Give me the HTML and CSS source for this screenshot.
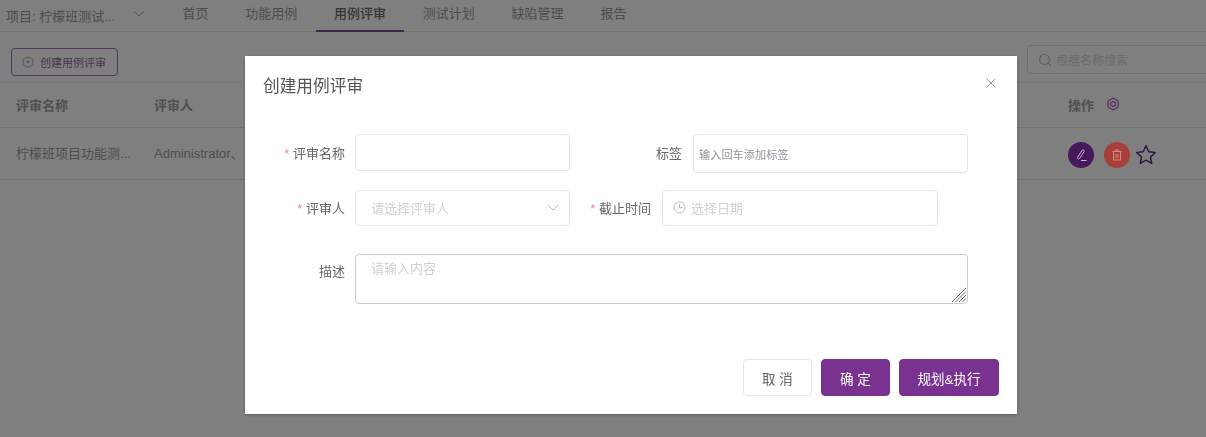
FILE: index.html
```html
<!DOCTYPE html>
<html lang="zh-CN">
<head>
    <meta charset="UTF-8">
    <title>创建用例评审</title>
    <link rel="stylesheet" href="styles.css">
</head>
<body>

    <div class="topbar">
        <div class="project">项目: 柠檬班测试...</div>
        <svg class="project-arrow" width="12" height="12" viewBox="0 0 12 12"><path d="M1 3.500 6 8l5-4.500" fill="none" stroke="#aaa" stroke-width="1"/></svg>
        <div class="nav">
            <a class="nav-item">首页</a>
            <a class="nav-item">功能用例</a>
            <a class="nav-item active">用例评审</a>
            <a class="nav-item">测试计划</a>
            <a class="nav-item">缺陷管理</a>
            <a class="nav-item">报告</a>
        </div>
    </div>

    <div class="toolbar">
        <button class="create-btn">
            <svg width="12" height="12" viewBox="0 0 12 12"><circle cx="6" cy="6" r="5" fill="none" stroke="#a8a8a8" stroke-width="1"/><circle cx="6" cy="6" r="1.300" fill="#a8a8a8"/></svg>
            创建用例评审
        </button>
        <div class="search">
            <svg width="14" height="14" viewBox="0 0 14 14"><circle cx="6.500" cy="6.500" r="5" fill="none" stroke="#c0c4cc" stroke-width="1.200"/><path d="M10 10l3 3" stroke="#c0c4cc" stroke-width="1.200"/></svg>
            <span>根据名称搜索</span>
        </div>
    </div>

    <div class="table-row table-head">
        <div class="col-name">评审名称</div>
        <div class="col-user">评审人</div>
        <div class="col-ops">操作
            <svg class="gear" width="14" height="14" viewBox="0 0 14 14"><path d="M7 1l5 3v6l-5 3-5-3V4z" fill="none" stroke="#a860d0" stroke-width="1.200"/><circle cx="7" cy="7" r="2.300" fill="none" stroke="#a860d0" stroke-width="1.200"/></svg>
        </div>
    </div>
    <div class="table-row table-body">
        <div class="col-name">柠檬班项目功能测...</div>
        <div class="col-user">Administrator、</div>
        <div class="col-ops">
            <span class="round-btn edit">
                <svg width="14" height="14" viewBox="0 0 14 14"><path d="M3.500 9.500l4.500-7c1-1.200 2.800-.2 2 1.200L6 10c-1 1.200-3 .8-2.500-.5zM7 12.500h5.500" fill="none" stroke="#c8b4d4" stroke-width="1"/></svg>
            </span>
            <span class="round-btn del">
                <svg width="14" height="14" viewBox="0 0 14 14"><path d="M2.500 3.500h9M5.500 3.500V2h3v1.500M3.500 3.500v8.500h7V3.500M6 6v4M8 6v4" fill="none" stroke="#d08a84" stroke-width="1"/></svg>
            </span>
            <svg class="star" width="22" height="22" viewBox="0 0 22 22"><path d="M11 1.800l2.800 6 6.400.8-4.700 4.400 1.200 6.400-5.700-3.200-5.700 3.200 1.200-6.400L1.800 8.600l6.400-.8z" fill="none" stroke="#5e2e88" stroke-width="1.500" stroke-linejoin="round"/></svg>
        </div>
    </div>

    <div class="overlay">
        <div class="dialog">
            <div class="dialog-head">
                <span class="dialog-title">创建用例评审</span>
                <svg class="close" width="12" height="12" viewBox="0 0 12 12"><path d="M1.500 1.500l9 9M10.500 1.500l-9 9" stroke="#999" stroke-width="1"/></svg>
            </div>

            <div class="form">
                <div class="form-row row-one">
                    <label class="form-label"><i>*</i> 评审名称</label>
                    <div class="field field-name"></div>
                    <label class="form-label label-tag">标签</label>
                    <div class="field field-tag">输入回车添加标签</div>
                </div>
                <div class="form-row row-two">
                    <label class="form-label"><i>*</i> 评审人</label>
                    <div class="field field-name field-select">
                        <span>请选择评审人</span>
                        <svg width="12" height="12" viewBox="0 0 12 12"><path d="M1 4l5 5 5-5" fill="none" stroke="#bbb" stroke-width="1"/></svg>
                    </div>
                    <label class="form-label label-date"><i>*</i> 截止时间</label>
                    <div class="field field-date">
                        <svg width="13" height="13" viewBox="0 0 13 13"><circle cx="6.500" cy="6.500" r="5.500" fill="none" stroke="#bbb" stroke-width="1"/><path d="M6.500 3.200v3.500h3" fill="none" stroke="#bbb" stroke-width="1"/></svg>
                        <span>选择日期</span>
                    </div>
                </div>
                <div class="form-row row-three">
                    <label class="form-label">描述</label>
                    <div class="field field-desc">
                        <span>请输入内容</span>
                        <svg class="resize" width="16" height="16" viewBox="0 0 16 16"><path d="M1 15 15 1M4.500 15 15 4.500M8 15l7-7M11.500 15l3.500-3.500" stroke="#666" stroke-width="1"/></svg>
                    </div>
                </div>
            </div>

            <div class="dialog-foot">
                <button class="btn btn-plain">取 消</button>
                <button class="btn btn-primary">确 定</button>
                <button class="btn btn-primary btn-wide">规划&amp;执行</button>
            </div>
        </div>
    </div>

</body>
</html>
```

FILE: styles.css
```css
* {
    margin: 0;
    padding: 0;
    box-sizing: border-box;
}

body {
    font-family: "Liberation Sans", "Noto Sans CJK SC", sans-serif;
    background: #ffffff;
    color: #606266;
    height: 437px;
    overflow: hidden;
}

.topbar {
    display: flex;
    align-items: center;
    height: 32px;
    border-bottom: 1px solid #e6e6e6;
    font-size: 13px;
}

.project {
    width: 133px;
    padding-left: 6px;
    color: #999999;
}

.project-arrow {
    margin-top: -4px;
}

.nav {
    display: flex;
    margin-left: 19px;
    height: 32px;
}

.nav-item {
    padding: 0 18.400px;
    line-height: 27px;
    color: #999999;
}

.nav-item.active {
    color: #6b6b6b;
    font-weight: 500;
    border-bottom: 2px solid #7b4aa0;
}

.toolbar {
    display: flex;
    justify-content: space-between;
    align-items: center;
    height: 51px;
    padding: 10px 0 0 11px;
    border-bottom: 1px solid #ebeef5;
}

.create-btn {
    display: flex;
    align-items: center;
    gap: 6px;
    width: 107px;
    height: 28px;
    padding-left: 10px;
    background: #ffffff;
    border: 1px solid #a070b8;
    border-radius: 4px;
    color: #8f6aa0;
    font: inherit;
    font-size: 11px;
}

.search {
    display: flex;
    align-items: center;
    gap: 4px;
    width: 190px;
    height: 29px;
    margin-top: -5px;
    margin-right: -11px;
    padding-left: 10px;
    border: 1px solid #dcdfe6;
    border-radius: 4px;
    color: #d4d4d4;
    font-size: 12px;
}

.table-row {
    display: flex;
    align-items: center;
    border-bottom: 1px solid #e4e4e4;
    font-size: 13px;
}

.table-head {
    height: 45px;
    font-weight: 700;
    color: #a0a0a0;
}

.table-body {
    height: 52px;
    color: #9c9c9c;
}

.col-name {
    width: 154px;
    padding-left: 16px;
    padding-bottom: 2px;
    white-space: nowrap;
}

.col-user {
    width: 914px;
    padding-bottom: 2px;
}

.col-ops {
    display: flex;
    align-items: center;
}

.table-head .col-ops {
    padding-bottom: 2px;
}

.table-body .col-ops {
    padding-top: 3px;
}

.gear {
    margin-left: 12px;
}

/* these sit above the dim layer, their colours are the dimmed ones */
.round-btn {
    position: relative;
    z-index: 1;
    display: flex;
    align-items: center;
    justify-content: center;
    width: 26px;
    height: 26px;
    border-radius: 50%;
}

.round-btn.edit {
    background: #45195a;
    margin-right: 10px;
}

.round-btn.del {
    background: #a83f3a;
}

.star {
    margin-left: 5px;
}

.overlay {
    position: fixed;
    top: 0;
    left: 0;
    right: 0;
    bottom: 0;
    background: rgba(0, 0, 0, 0.5);
    padding: 56px 0 0 245px;
}

.dialog {
    display: flex;
    flex-direction: column;
    width: 772px;
    height: 358px;
    background: #ffffff;
    box-shadow: 0 1px 3px rgba(0, 0, 0, 0.3);
}

.dialog-head {
    display: flex;
    justify-content: space-between;
    align-items: center;
    height: 56px;
    padding: 2px 20px 0 18px;
}

.dialog-title {
    font-size: 16.700px;
    color: #555555;
}

.close {
    margin-top: -4px;
}

.form {
    padding-top: 22px;
    flex: 1;
}

.form-row {
    display: flex;
    align-items: flex-start;
}

.row-one {
    height: 56px;
}

.row-two {
    height: 64px;
}

.form-label {
    width: 100px;
    flex: none;
    height: 36px;
    line-height: 37px;
    text-align: right;
    font-size: 13px;
    color: #666666;
}

.row-one .form-label {
    line-height: 40px;
}

.row-three .form-label {
    line-height: 35px;
}

.form-label i {
    color: #f08a8a;
    font-style: normal;
}

.label-tag {
    width: 112px;
}

.label-date {
    width: 81px;
}

.field {
    flex: none;
    margin-left: 10px;
    border: 1px solid #e2e4e8;
    border-radius: 4px;
    background: #ffffff;
    color: #cfd1d6;
    font-size: 13px;
}

.field-name {
    width: 215px;
    height: 37px;
}

.field-tag {
    width: 275px;
    height: 39px;
    margin-left: 11px;
    padding-left: 5px;
    line-height: 40px;
    font-size: 11.200px;
    color: #909399;
}

.field-select {
    display: flex;
    justify-content: space-between;
    align-items: center;
    height: 36px;
    padding: 0 10px 2px 15px;
}

.field-date {
    display: flex;
    align-items: center;
    gap: 5px;
    width: 276px;
    height: 36px;
    margin-left: 11px;
    padding: 0 0 2px 10px;
}

.field-desc {
    position: relative;
    width: 613px;
    height: 50px;
    padding: 5px 15px;
    line-height: 18px;
    border-color: #cccccc;
}

.resize {
    position: absolute;
    right: 0;
    bottom: 0;
}

.dialog-foot {
    display: flex;
    justify-content: flex-end;
    gap: 9px;
    padding: 0 18px 18px 0;
}

.btn {
    width: 69px;
    height: 37px;
    border-radius: 4px;
    font: inherit;
    font-size: 13.500px;
}

.btn-plain {
    background: #ffffff;
    border: 1px solid #e6e6e6;
    color: #606266;
}

.btn-primary {
    background: #7a3290;
    border: 1px solid #7a3290;
    color: #ffffff;
}

.btn-wide {
    width: 100px;
}
```
